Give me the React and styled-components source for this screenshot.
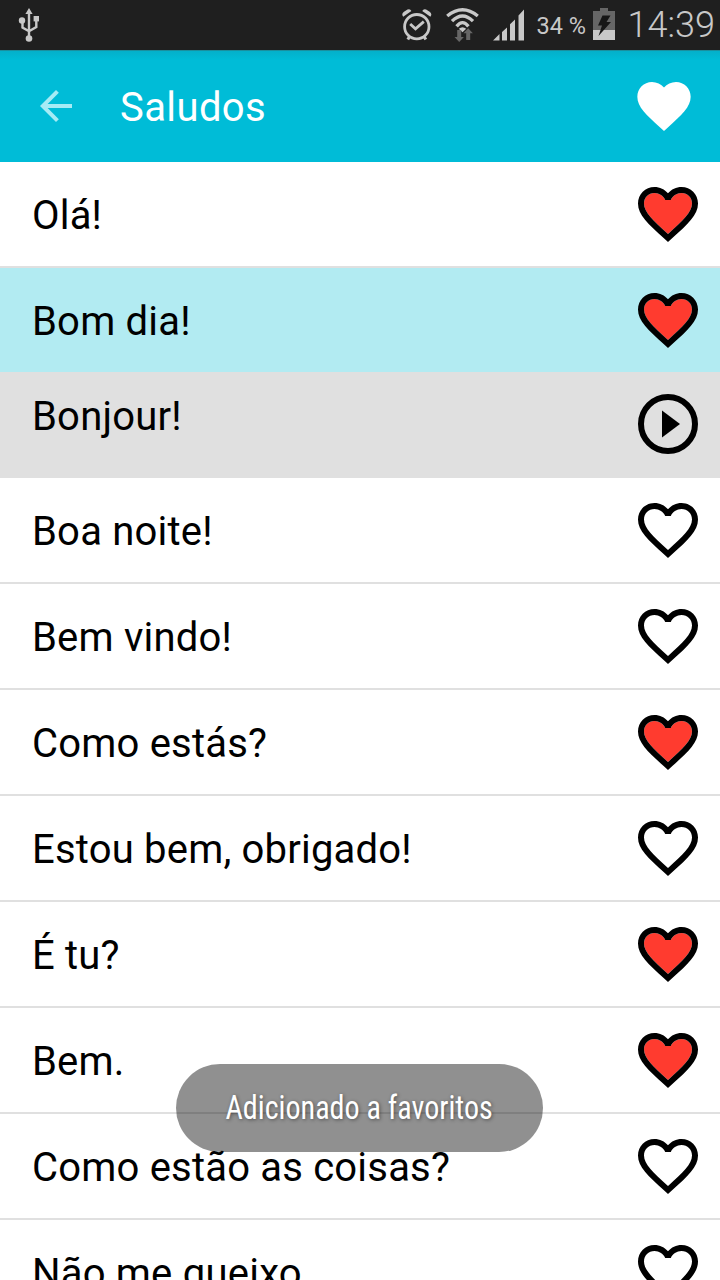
import React, { useState } from "react";
import styled, { createGlobalStyle } from "styled-components";

const GlobalStyle = createGlobalStyle`
    * {
        box-sizing: border-box;
    }
    html, body {
        margin: 0;
        height: 100%;
        overflow: hidden;
        background: #fff;
        font-family: Roboto, "Noto Sans", sans-serif;
    }
`;

const Screen = styled.div`
    position: relative;
    width: 720px;
    height: 1280px;
    overflow: hidden;
    display: flex;
    flex-direction: column;
`;

const StatusBar = styled.div`
    display: flex;
    align-items: center;
    flex: none;
    height: 50px;
    padding: 0 5px 0 18px;
    background: #1f1f1f;
    color: #c8c8c8;
    svg {
        display: block;
        flex: none;
    }
`;

const Spacer = styled.div`
    flex: 1;
`;

const StatusIcons = styled.div`
    display: flex;
    align-items: center;
    gap: 14px;
`;

const Percent = styled.div`
    width: 50px;
    margin: 2px 6px 0 13px;
    font-size: 23.5px;
    line-height: 48px;
    white-space: nowrap;
`;

const Clock = styled.div`
    margin-left: 13px;
    font-size: 36px;
    font-weight: 300;
    line-height: 50px;
`;

const Toolbar = styled.div`
    display: flex;
    align-items: center;
    flex: none;
    height: 112px;
    padding: 0 24px 1px 32px;
    background: linear-gradient(#1a8f9e 1px, #04b0ca 1px, #00bcd7 10px);
    svg {
        display: block;
    }
`;

const Title = styled.h1`
    flex: 1;
    margin: 3px 0 0 40px;
    font-size: 40px;
    font-weight: 400;
    letter-spacing: 0.4px;
    color: #fff;
`;

const List = styled.ul`
    flex: none;
    list-style: none;
    margin: 0;
    padding: 0;
`;

const Row = styled.li`
    display: flex;
    align-items: center;
    height: 106px;
    padding: 0 16px 0 32px;
    border-bottom: 2px solid #e0e0e0;
    background: ${props => (props.$active ? "#b2ebf2" : "#fff")};
    svg {
        display: block;
    }
`;

const Translation = styled(Row)`
    height: 104px;
    padding-bottom: 4px;
    border-bottom: none;
    background: #e0e0e0;
`;

const Phrase = styled.div`
    flex: 1;
    margin-top: ${props => (props.$raised ? "-14px" : "4px")};
    font-size: 40px;
    line-height: 48px;
    letter-spacing: 0.2px;
    color: #000;
    white-space: nowrap;
`;

const Toast = styled.div`
    position: absolute;
    left: 176px;
    top: 1064px;
    width: 367px;
    height: 88px;
    border-radius: 44px;
    background: rgba(12, 12, 12, 0.453);
    color: #fff;
    display: flex;
    align-items: center;
    justify-content: center;
    font-family: "Roboto Condensed", Roboto, sans-serif;
    font-size: 32px;
    white-space: nowrap;
    text-shadow: 1px 1px 4px rgba(0, 0, 0, 0.45);
`;

const ToastText = styled.span`
    transform: scale(0.94, 1.03);
`;

const HEART =
    "M12 21.35l-1.45-1.32C5.4 15.36 2 12.28 2 8.5 2 5.42 4.42 3 7.5 3c1.74 0 3.41.81 4.5 2.09C13.09 3.81 14.76 3 16.5 3 19.58 3 22 5.42 22 8.5c0 3.78-3.4 6.86-8.55 11.54L12 21.35z";
const HEART_INNER =
    "M12.1 18.55l-.1.1-.1-.1C7.14 14.24 4 11.39 4 8.5 4 6.5 5.5 5 7.5 5c1.54 0 3.04.99 3.57 2.36h1.87C13.46 5.99 14.96 5 16.5 5c2 0 3.5 1.5 3.5 3.5 0 2.89-3.14 5.74-7.9 10.05z";

const Favorite = ({ on }) => (
    <svg width="72" height="72" viewBox="0 0 24 24">
        {on ? <path d={HEART_INNER} fill="#ff3b2f" /> : null}
        <path d={HEART + HEART_INNER} fillRule="evenodd" fill="#000" />
    </svg>
);

const PlayIcon = () => (
    <svg width="72" height="72" viewBox="0 0 24 24">
        <circle cx="12" cy="12" r="9" fill="none" stroke="#000" strokeWidth="2" />
        <path d="M10 16.5l6-4.5-6-4.5z" />
    </svg>
);

const UsbIcon = () => (
    <svg width="22" height="34" viewBox="0 0 22 34" fill="#c8c8c8">
        <path d="M11 0l3.6 6h-7.2z" />
        <circle cx="4" cy="12.500" r="3.2" />
        <rect x="15.6" y="8" width="5.4" height="5.4" />
        <circle cx="11" cy="30.5" r="3.3" />
        <path
            d="M11 4v25M4.5 13v6.5L11 23.3M18.3 12v7L11 23.3"
            fill="none"
            stroke="#c8c8c8"
            strokeWidth="2.4"
        />
    </svg>
);

const AlarmIcon = () => (
    <svg width="30" height="32" viewBox="0 0 30 32" fill="none" stroke="#c8c8c8">
        <circle cx="14.8" cy="17.7" r="12.2" strokeWidth="2.8" />
        <path
            d="M1.200 7.800Q-1 5 2 2.800L5.500 .6Q8 -.6 9.400 1.900zM28.400 7.800Q30.600 5 27.600 2.800L24.100 .6Q21.600 -.6 20.200 1.900z"
            fill="#c8c8c8"
            stroke="none"
        />
        <path d="M8.200 15l5.300 4.800 8.300-7.200" strokeWidth="2.8" />
        <path d="M7.600 27.500l-1.800 3M22 27.500l1.800 3" strokeWidth="3" />
    </svg>
);

const WifiIcon = () => (
    <svg width="33" height="34" viewBox="0 0 33 34" fill="none" stroke="#c8c8c8">
        <path
            d="M1.200 8Q16.500-4.500 31.800 8M6 13.200Q16.500 2.800 27 13.200M10.600 18.400Q16.500 11 22.400 18.400"
            strokeWidth="3.3"
        />
        <path d="M12.800 20.800q3.700-3.200 7.400 0l-3.700 3.500z" fill="#c8c8c8" stroke="none" />
        <path
            d="M11.200 22v7H8.500l4.700 5 4.700-5h-2.700v-7zM20.200 32v-6.700h-2.700l4.700-5 4.700 5h-2.700V32z"
            fill="#666"
            stroke="none"
        />
    </svg>
);

const SignalIcon = () => (
    <svg width="31" height="32" viewBox="0 0 31 32" fill="#c8c8c8">
        <path d="M0 31.500l6.500-6.500v6.500zM9 23l5-4.600v13.100H9zM17 15.200l5-4.600v20.900h-5zM25.500 6.500L31 .5v31h-5.500z" />
    </svg>
);

const BatteryIcon = () => (
    <svg width="22" height="34" viewBox="0 0 22 34">
        <path d="M0 3h7V0h8v3h7v19H0z" fill="#666" />
        <rect y="22" width="22" height="10" fill="#c8c8c8" />
        <path d="M9.500 7.500h8L13.500 14h4.500L5.500 28l3.500-10.500H5z" fill="#161616" />
    </svg>
);

const phrases = [
    { text: "Olá!", favorite: true },
    { text: "Bom dia!", favorite: true, translation: "Bonjour!" },
    { text: "Boa noite!" },
    { text: "Bem vindo!" },
    { text: "Como estás?", favorite: true },
    { text: "Estou bem, obrigado!" },
    { text: "É tu?", favorite: true },
    { text: "Bem.", favorite: true },
    { text: "Como estão as coisas?" },
    { text: "Não me queixo." }
];

const App = () => {
    const [selected, setSelected] = useState(1);

    return (
        <Screen>
            <GlobalStyle />
            <StatusBar>
                <UsbIcon />
                <Spacer />
                <StatusIcons>
                    <AlarmIcon />
                    <WifiIcon />
                    <SignalIcon />
                </StatusIcons>
                <Percent>34 %</Percent>
                <BatteryIcon />
                <Clock>14:39</Clock>
            </StatusBar>
            <Toolbar>
                <svg width="48" height="48" viewBox="0 0 24 24" fill="#a6ebf5">
                    <path d="M20 11H7.830l5.590-5.590L12 4l-8 8 8 8 1.410-1.410L7.830 13H20v-2z" />
                </svg>
                <Title>Saludos</Title>
                <svg width="64" height="64" viewBox="0 0 24 24" fill="#fff">
                    <path d={HEART} />
                </svg>
            </Toolbar>
            <List>
                {phrases.map((phrase, index) => (
                    <React.Fragment key={phrase.text}>
                        <Row
                            $active={selected === index}
                            onClick={() => setSelected(index)}
                        >
                            <Phrase>{phrase.text}</Phrase>
                            <Favorite on={phrase.favorite} />
                        </Row>
                        {selected === index && phrase.translation ? (
                            <Translation as="li">
                                <Phrase $raised>{phrase.translation}</Phrase>
                                <PlayIcon />
                            </Translation>
                        ) : null}
                    </React.Fragment>
                ))}
            </List>
            <Toast>
                <ToastText>Adicionado a favoritos</ToastText>
            </Toast>
        </Screen>
    );
};

export default App;
